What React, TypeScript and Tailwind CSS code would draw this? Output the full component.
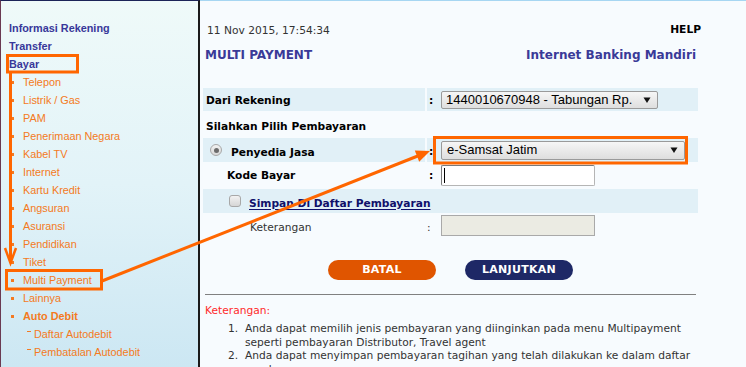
import React from "react";

const sideItems = [
  "Telepon",
  "Listrik / Gas",
  "PAM",
  "Penerimaan Negara",
  "Kabel TV",
  "Internet",
  "Kartu Kredit",
  "Angsuran",
  "Asuransi",
  "Pendidikan",
  "Tiket",
  "Multi Payment",
  "Lainnya",
];

function Caret() {
  return (
    <svg width="8" height="8" viewBox="0 0 8 8" className="shrink-0">
      <polygon points="0.5,1.5 7.5,1.5 4,7" fill="#111" />
    </svg>
  );
}

function Sidebar() {
  return (
    <div className="w-[200px] shrink-0 h-full border-l border-l-[#6a3a52] border-t border-t-[#1c2458] border-r-2 border-r-[#1a1a1a] bg-linear-to-b from-[#effaf9] via-[#e2f3f8] to-[#cce7f3] pt-[18px] pl-[8px] font-['Liberation_Sans',Arial,sans-serif] text-[10.85px] leading-[18px]">
      <div className="font-bold text-[#38389a]">Informasi Rekening</div>
      <div className="font-bold text-[#38389a]">Transfer</div>
      <div className="font-bold text-[#38389a]">Bayar</div>
      {sideItems.map((t) => (
        <div key={t} className="flex items-center text-[#f47a22]">
          <span className="w-[3px] h-[3px] bg-[#f47a22] ml-[2px] mr-[9px]" />
          <span>{t}</span>
        </div>
      ))}
      <div className="flex items-center text-[#f47a22] font-bold">
        <span className="w-[3px] h-[3px] bg-[#f47a22] ml-[2px] mr-[9px]" />
        <span>Auto Debit</span>
      </div>
      {["Daftar Autodebit", "Pembatalan Autodebit"].map((t) => (
        <div key={t} className="flex items-center text-[#f47a22] pl-[18px]">
          <span className="w-[4px] h-[1px] bg-[#f47a22] mr-[3px] -mt-[6px]" />
          <span>{t}</span>
        </div>
      ))}
    </div>
  );
}

function Main() {
  return (
    <div className="flex-1 h-full border-t border-t-[#a6d6f2] bg-[#f7fbfe] pl-[3px] font-['DejaVu_Sans',Verdana,sans-serif] text-[10.67px] leading-[13px] text-[#333]">
      <div className="w-[495px]">
        {/* header */}
        <div className="flex justify-between items-start pt-[23px] pl-[4px] -mr-[3px]">
          <span>11 Nov 2015, 17:54:34</span>
          <span className="font-bold text-black -mt-[1px]">HELP</span>
        </div>
        <div className="flex justify-between items-start mt-[11px] pl-[2px] pr-[2px] text-[12px] leading-[14px] font-bold text-[#3a3a98]">
          <span>MULTI PAYMENT</span>
          <span>Internet Banking Mandiri</span>
        </div>

        {/* form */}
        <div className="mt-[26px] grid grid-cols-[222px_271px] gap-x-[2px] text-black">
          {/* Dari Rekening */}
          <div className="h-[23px] bg-[#e1f0f7] flex items-center pl-[3px] pt-[1px] font-bold">Dari Rekening</div>
          <div className="h-[23px] bg-[#e1f0f7] flex items-center">
            <span className="w-[14px] pl-[2px] pt-[1px] font-bold">:</span>
            <div className="w-[217px] h-[18px] rounded-[2px] border border-[#9a9a9a] bg-linear-to-b from-[#f6f6f6] to-[#dedede] flex items-center justify-between pl-[4px] pr-[6px] font-['Liberation_Sans',Arial,sans-serif] text-[13px] leading-[16px]">
              <span>1440010670948 - Tabungan Rp.</span>
              <Caret />
            </div>
          </div>

          {/* Silahkan */}
          <div className="col-span-2 h-[27px] pt-[9px] pl-[3px] font-bold">Silahkan Pilih Pembayaran</div>

          {/* Penyedia Jasa */}
          <div className="h-[24px] bg-[#e1f0f7] flex items-center pl-[7px] font-bold">
            <span className="w-[12px] h-[12px] rounded-full border border-[#a8a8a8] bg-linear-to-b from-[#f2f2f2] to-[#d8d8d8] flex items-center justify-center">
              <span className="w-[5px] h-[5px] rounded-full bg-[#6b6b6b]" />
            </span>
            <span className="pl-[9px] pt-[4px]">Penyedia Jasa</span>
          </div>
          <div className="h-[24px] bg-[#e1f0f7] flex items-center">
            <span className="w-[14px] pl-[2px] font-bold pt-[2px]">:</span>
            <div className="w-[244px] h-[19px] rounded-[2px] border border-[#9a9a9a] bg-linear-to-b from-[#f6f6f6] to-[#dedede] flex items-center justify-between pl-[5px] pr-[6px] font-['Liberation_Sans',Arial,sans-serif] text-[13px] leading-[16px]">
              <span>e-Samsat Jatim</span>
              <Caret />
            </div>
          </div>

          {/* Kode Bayar */}
          <div className="h-[27px] flex items-center pl-[24px] font-bold">Kode Bayar</div>
          <div className="h-[27px] flex items-center">
            <span className="w-[14px] pl-[2px] font-bold">:</span>
            <div className="w-[154px] h-[21px] border border-[#7a7a7a] border-b-[#b5b5b5] border-r-[#b5b5b5] rounded-[2px] bg-white flex items-center pl-[2px]">
              <span className="w-[1px] h-[15px] bg-black" />
            </div>
          </div>

          {/* Simpan */}
          <div className="col-span-2 h-[24px] bg-[#e1f0f7] flex items-center pl-[26px] font-bold whitespace-nowrap">
            <span className="w-[12px] h-[12px] shrink-0 rounded-[3px] border border-[#a8a8a8] bg-linear-to-b from-[#f2f2f2] to-[#d6d6d6]" />
            <span className="pl-[8px] pt-[4px] text-[#10106a] underline underline-offset-[2px]">Simpan Di Daftar Pembayaran</span>
          </div>

          {/* Keterangan */}
          <div className="h-[25px] flex items-center pl-[47px] pt-[3px] text-[#333]">Keterangan</div>
          <div className="h-[25px] flex items-center">
            <span className="w-[14px] pl-[0px] pt-[3px] text-[#333]">:</span>
            <div className="w-[154px] h-[21px] border border-[#a9a9a9] bg-[#ebebe3]" />
          </div>
        </div>

        {/* buttons */}
        <div className="mt-[22px] flex justify-center gap-[29px]">
          <div className="w-[108px] h-[20px] rounded-full bg-[#e05500] text-white font-bold text-[11px] leading-[20px] text-center tracking-[0.3px]">BATAL</div>
          <div className="w-[108px] h-[20px] rounded-full bg-[#1e2866] text-white font-bold text-[11px] leading-[20px] text-center tracking-[0.3px]">LANJUTKAN</div>
        </div>

        <div className="mt-[14px] mx-[2px] h-[1px] bg-[#808080]" />

        <div className="mt-[9px] pl-[2px] text-[#ff2a2a]">Keterangan:</div>
        <div className="mt-[5px] leading-[13.5px] text-[#333]">
          <div className="flex">
            <span className="w-[42px] shrink-0 pl-[25px]">1.</span>
            <span>
              Anda dapat memilih jenis pembayaran yang diinginkan pada menu Multipayment
              <br />
              seperti pembayaran Distributor, Travel agent
            </span>
          </div>
          <div className="flex">
            <span className="w-[42px] shrink-0 pl-[25px]">2.</span>
            <span>
              Anda dapat menyimpan pembayaran tagihan yang telah dilakukan ke dalam daftar
              <br />
              pembayaran
            </span>
          </div>
        </div>
      </div>
    </div>
  );
}

function Annotations() {
  const c = "#ff6600";
  return (
    <svg
      className="absolute inset-0 pointer-events-none"
      width="746"
      height="367"
      viewBox="0 0 746 367"
    >
      {/* Bayar box */}
      <rect x="7.5" y="55.5" width="70" height="16.5" fill="none" stroke={c} strokeWidth="3" />
      {/* vertical arrow */}
      <line x1="10.5" y1="72" x2="10.5" y2="263" stroke={c} strokeWidth="3" />
      <polyline points="5,248 10.5,263 16,248" fill="none" stroke={c} strokeWidth="2.5" />
      {/* Multi Payment box */}
      <rect x="6.5" y="270.5" width="95" height="18.5" fill="none" stroke={c} strokeWidth="3" />
      {/* diagonal arrow */}
      <line x1="102" y1="281" x2="419" y2="155.5" stroke={c} strokeWidth="3" />
      <polygon points="430,151 419.2,161.8 414.8,150.6" fill={c} />
      {/* e-Samsat box */}
      <rect x="434.5" y="137.5" width="252" height="25.5" fill="none" stroke={c} strokeWidth="3" />
    </svg>
  );
}

export default function App() {
  return (
    <div className="relative w-[746px] h-[367px] overflow-hidden flex">
      <Sidebar />
      <Main />
      <Annotations />
    </div>
  );
}
